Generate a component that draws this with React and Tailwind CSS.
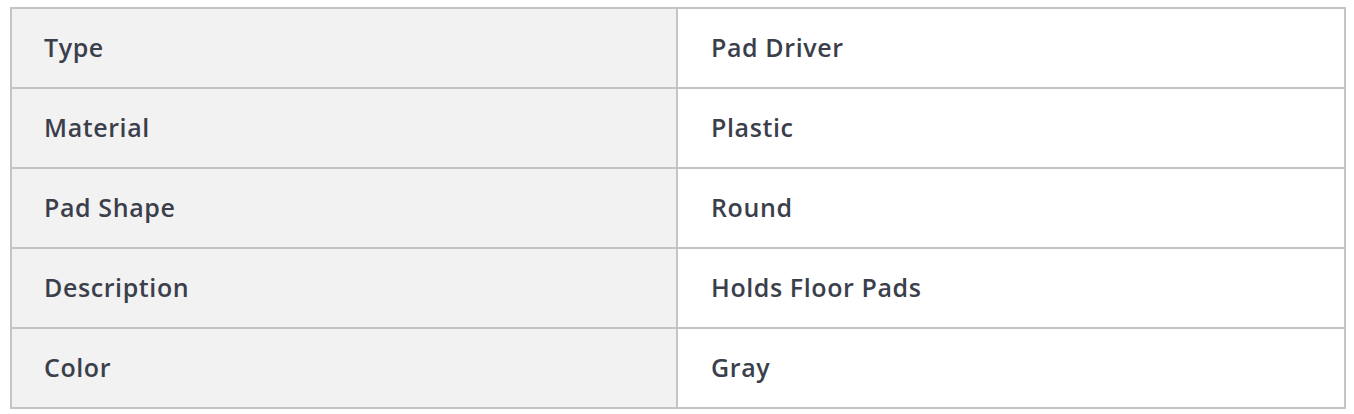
export default function App() {
  const rows = [
    ["Type", "Pad Driver"],
    ["Material", "Plastic"],
    ["Pad Shape", "Round"],
    ["Description", "Holds Floor Pads"],
    ["Color", "Gray"],
  ];
  return (
    <div className="w-[1354px] h-[414px] bg-white pt-[7px] pl-[10px]" style={{ fontFamily: '"Open Sans", sans-serif' }}>
      <div className="w-[1336px] border-2 border-[#c4c4c4]">
        {rows.map(([k, v], i) => (
          <div key={k} className={`grid grid-cols-[664px_2px_1fr] ${i > 0 ? "h-[80px] border-t-2 border-[#c4c4c4]" : "h-[78px]"}`}>
            <div className="bg-[#f2f2f2] flex items-center pl-[32px] text-[25px] font-semibold tracking-[0.6px] text-[#3b3f4b]">{k}</div>
            <div className="bg-[#c4c4c4]" />
            <div className="bg-white flex items-center pl-[33px] text-[25px] font-semibold tracking-[0.6px] text-[#3b3f4b]">{v}</div>
          </div>
        ))}
      </div>
    </div>
  );
}
